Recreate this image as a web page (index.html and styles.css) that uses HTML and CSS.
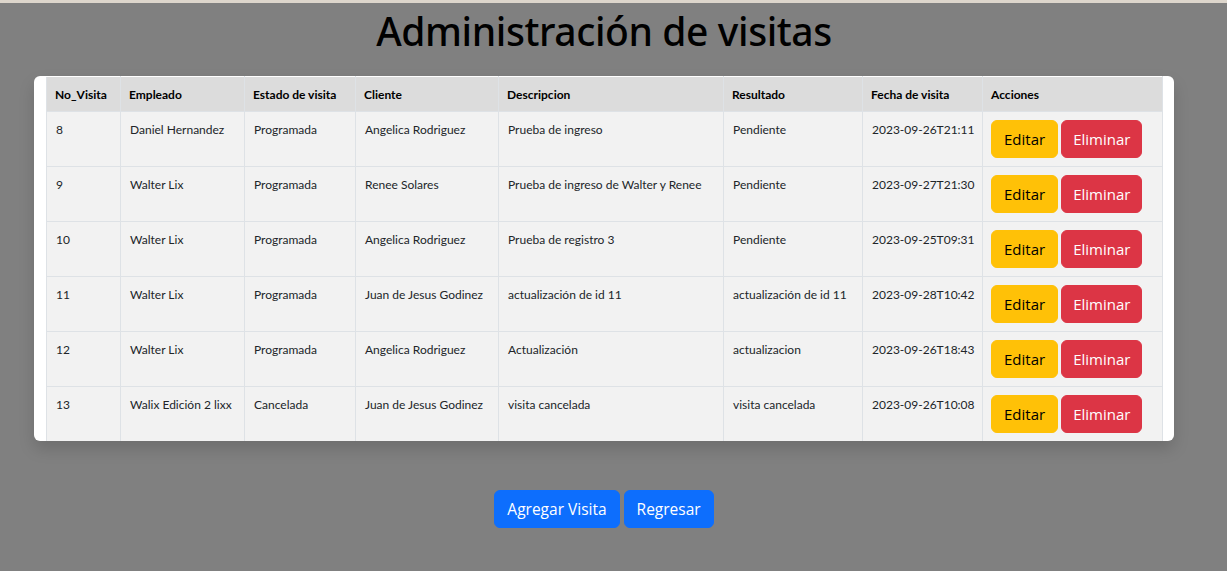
FILE: index.html
```html
<!DOCTYPE html>
<html lang="es">
<head>
<meta charset="utf-8">
<title>Administración de visitas</title>
<link rel="stylesheet" href="styles.css">
</head>
<body>
<div class="topbar"></div>
<div class="page">
  <h1 class="title">Administración de visitas</h1>
  <div class="card">
    <table class="grid">
      <colgroup>
        <col class="c1"><col class="c2"><col class="c3"><col class="c4"><col class="c5"><col class="c6"><col class="c7"><col class="c8">
      </colgroup>
      <thead>
        <tr><th>No_Visita</th><th>Empleado</th><th>Estado de visita</th><th>Cliente</th><th>Descripcion</th><th>Resultado</th><th>Fecha de visita</th><th>Acciones</th></tr>
      </thead>
      <tbody>
        <tr><td>8</td><td>Daniel Hernandez</td><td>Programada</td><td>Angelica Rodriguez</td><td>Prueba de ingreso</td><td>Pendiente</td><td>2023-09-26T21:11</td><td><button class="btn btn-warn">Editar</button> <button class="btn btn-danger">Eliminar</button></td></tr>
        <tr><td>9</td><td>Walter Lix</td><td>Programada</td><td>Renee Solares</td><td>Prueba de ingreso de Walter y Renee</td><td>Pendiente</td><td>2023-09-27T21:30</td><td><button class="btn btn-warn">Editar</button> <button class="btn btn-danger">Eliminar</button></td></tr>
        <tr><td>10</td><td>Walter Lix</td><td>Programada</td><td>Angelica Rodriguez</td><td>Prueba de registro 3</td><td>Pendiente</td><td>2023-09-25T09:31</td><td><button class="btn btn-warn">Editar</button> <button class="btn btn-danger">Eliminar</button></td></tr>
        <tr><td>11</td><td>Walter Lix</td><td>Programada</td><td>Juan de Jesus Godinez</td><td>actualización de id 11</td><td>actualización de id 11</td><td>2023-09-28T10:42</td><td><button class="btn btn-warn">Editar</button> <button class="btn btn-danger">Eliminar</button></td></tr>
        <tr><td>12</td><td>Walter Lix</td><td>Programada</td><td>Angelica Rodriguez</td><td>Actualización</td><td>actualizacion</td><td>2023-09-26T18:43</td><td><button class="btn btn-warn">Editar</button> <button class="btn btn-danger">Eliminar</button></td></tr>
        <tr><td>13</td><td>Walix Edición 2 lixx</td><td>Cancelada</td><td>Juan de Jesus Godinez</td><td>visita cancelada</td><td>visita cancelada</td><td>2023-09-26T10:08</td><td><button class="btn btn-warn">Editar</button> <button class="btn btn-danger">Eliminar</button></td></tr>
      </tbody>
    </table>
  </div>
  <div class="actions">
    <button class="btn btn-primary">Agregar Visita</button>
    <button class="btn btn-primary">Regresar</button>
  </div>
</div>
</body>
</html>
```
FILE: styles.css
```css
html, body {
  margin: 0;
  padding: 0;
}
body {
  background: #808080;
  font-family: "Open Sans", "Noto Sans", "Liberation Sans", sans-serif;
  color: #212529;
  min-height: 571px;
}
.topbar {
  height: 3px;
  background: #ddd6cc;
}
.page {
  width: 1208px;
}
.title {
  margin: 4px 0 0;
  text-align: center;
  font-family: "Noto Sans", "Open Sans", sans-serif;
  font-size: 39px;
  font-weight: 500;
  line-height: 48px;
  color: #000;
  letter-spacing: -0.4px;
}
.card {
  width: 1116px;
  margin: 21px auto 0;
  padding: 0 12px;
  background: #fff;
  border-radius: 6px;
  box-shadow: 0 8px 16px rgba(0,0,0,0.15);
}
.grid {
  width: 1116px;
  border-collapse: collapse;
  table-layout: fixed;
  font-family: Lato, "Open Sans", sans-serif;
  font-size: 12px;
}
.c1 { width: 74px; }
.c2 { width: 124px; }
.c3 { width: 111px; }
.c4 { width: 143px; }
.c5 { width: 225px; }
.c6 { width: 139px; }
.c7 { width: 120px; }
.c8 { width: 180px; }
.grid th, .grid td {
  border: 1px solid #dee2e6;
  text-align: left;
  vertical-align: top;
  white-space: nowrap;
}
.grid th {
  background: #dcdcdc;
  font-weight: 700;
  padding: 8px 8px 6px;
  line-height: 20px;
  color: #000;
  border-top: 1px solid #ffffff;
}
.grid td {
  background: #f2f2f2;
  padding: 8px 8px 8px 9px;
  line-height: 20px;
}
.grid td:last-child {
  padding-left: 8px;
}
.grid tr:last-child td {
  border-bottom: none;
}
.btn {
  font-family: "Open Sans", sans-serif;
  font-size: 15px;
  line-height: 24px;
  padding: 6px 12px;
  border: 1px solid transparent;
  border-radius: 6px;
  cursor: pointer;
}
.btn-warn {
  background: #ffc107;
  border-color: #ffc107;
  color: #000;
}
.btn-danger {
  background: #dc3545;
  border-color: #dc3545;
  color: #fff;
  padding: 6px 11px;
}
.btn-primary {
  background: #0d6efd;
  border-color: #0d6efd;
  color: #fff;
  font-size: 15.5px;
}
.actions {
  display: flex;
  justify-content: center;
  gap: 4px;
  margin-top: 49px;
}
```
